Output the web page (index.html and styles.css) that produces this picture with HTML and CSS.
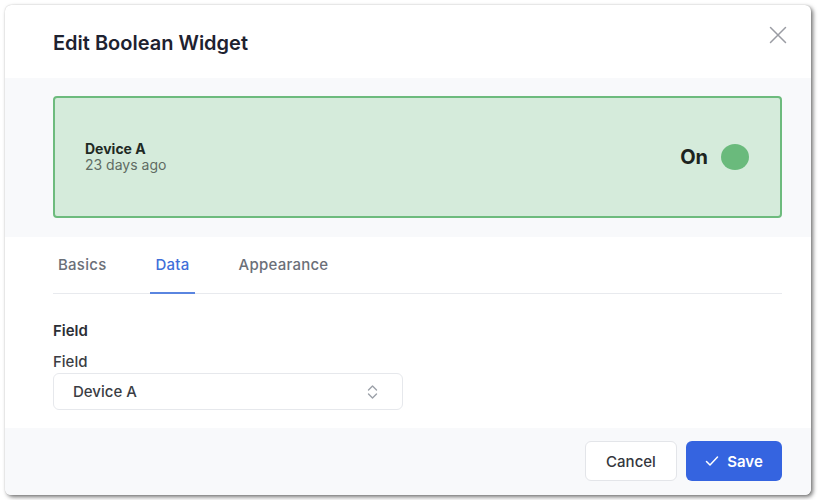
FILE: index.html
```html
<!DOCTYPE html>
<html lang="en">
<head>
<meta charset="utf-8">
<title>Edit Boolean Widget</title>
<link rel="stylesheet" href="styles.css">
</head>
<body>
<div class="dialog">
  <header class="dlg-header">
    <h1 class="dlg-title">Edit Boolean Widget</h1>
    <button class="close-btn" aria-label="Close">
      <svg width="18" height="18" viewBox="0 0 18 18"><path d="M1.5 1.5 L16.5 16.5 M16.5 1.5 L1.5 16.5" stroke="#9a9ca3" stroke-width="1.5" fill="none" stroke-linecap="round"/></svg>
    </button>
  </header>
  <section class="preview">
    <div class="bool-card">
      <div class="device">
        <div class="device-name">Device A</div>
        <div class="device-time">23 days ago</div>
      </div>
      <div class="state">
        <span class="state-label">On</span>
        <span class="state-dot"></span>
      </div>
    </div>
  </section>
  <section class="body">
    <nav class="tabs">
      <span class="tab">Basics</span>
      <span class="tab active">Data</span>
      <span class="tab">Appearance</span>
    </nav>
    <h2 class="section-title">Field</h2>
    <label class="field-label">Field</label>
    <div class="select">
      <span class="select-value">Device A</span>
      <svg class="chev" width="13" height="16" viewBox="0 0 13 16"><path d="M2.5 6 L6.5 2 L10.5 6 M2.5 10 L6.5 14 L10.5 10" stroke="#9ca0a8" stroke-width="1.4" fill="none" stroke-linecap="round" stroke-linejoin="round"/></svg>
    </div>
  </section>
  <footer class="dlg-footer">
    <button class="btn btn-cancel">Cancel</button>
    <button class="btn btn-save">
      <svg width="14" height="12" viewBox="0 0 14 12"><path d="M1.5 6.5 L5 10 L12.5 2" stroke="#fff" stroke-width="1.5" fill="none" stroke-linecap="round" stroke-linejoin="round"/></svg>
      Save
    </button>
  </footer>
</div>
</body>
</html>
```
FILE: styles.css
```css
* { box-sizing: border-box; }
html, body { margin: 0; background: #ffffff; }
body {
  padding: 5px;
  font-family: Inter, "Liberation Sans", sans-serif;
}
.dialog {
  width: 806px;
  height: 490px;
  background: #ffffff;
  border-radius: 6px;
  box-shadow: 0 0 1px rgba(0,0,0,0.25), 2px 2px 4px rgba(0,0,0,0.55);
  display: flex;
  flex-direction: column;
  overflow: hidden;
}
.dlg-header {
  height: 73px;
  display: flex;
  align-items: flex-start;
  justify-content: space-between;
  padding: 26px 22px 0 48px;
}
.dlg-title {
  margin: 0;
  font-size: 20px;
  line-height: 25px;
  font-weight: 600;
  color: #1e2230;
}
.close-btn {
  border: 0;
  background: transparent;
  padding: 0;
  margin-top: -7px;
  width: 22px;
  height: 22px;
  display: flex;
  align-items: center;
  justify-content: center;
}
.preview {
  background: #f8f9fb;
  padding: 18px 29px 19px 48px;
}
.bool-card {
  height: 122px;
  border: 2px solid #6dbb7d;
  border-radius: 4px;
  background: #d5ebdb;
  display: flex;
  align-items: center;
  justify-content: space-between;
  padding: 0 31px 0 30px;
}
.device-name {
  font-size: 14px;
  line-height: 16px;
  font-weight: 700;
  color: #1f2a24;
}
.device-time {
  font-size: 14px;
  line-height: 16px;
  color: #5f6b63;
}
.state {
  display: flex;
  align-items: center;
  gap: 13px;
}
.state-label {
  font-size: 20px;
  font-weight: 700;
  color: #1c2420;
}
.state-dot {
  width: 28px;
  height: 26px;
  border-radius: 50%;
  background: #6aba7c;
}
.body {
  flex: 1;
  padding: 0 29px 0 48px;
  display: flex;
  flex-direction: column;
  align-items: flex-start;
}
.tabs {
  align-self: stretch;
  display: flex;
  gap: 39px;
  border-bottom: 1px solid #e8eaee;
}
.tab {
  padding: 18px 5px 17px;
  font-size: 15px;
  line-height: 20px;
  font-weight: 500;
  letter-spacing: 0.25px;
  color: #6b6f78;
  border-bottom: 2px solid transparent;
  margin-bottom: -1px;
}
.tab.active {
  color: #3f6fd9;
  border-bottom-color: #5a85e0;
}
.section-title {
  margin: 27px 0 0;
  font-size: 15px;
  line-height: 20px;
  font-weight: 600;
  color: #2b2e35;
}
.field-label {
  margin-top: 11px;
  font-size: 15px;
  line-height: 20px;
  font-weight: 500;
  color: #3a3d44;
}
.select {
  margin-top: 1px;
  width: 350px;
  height: 37px;
  border: 1px solid #e6e8ec;
  border-radius: 6px;
  display: flex;
  align-items: center;
  justify-content: space-between;
  padding: 0 23px 0 19px;
}
.select-value {
  font-size: 15px;
  font-weight: 500;
  color: #3a3d44;
}
.dlg-footer {
  height: 67px;
  background: #f8f9fb;
  display: flex;
  justify-content: flex-end;
  align-items: flex-start;
  gap: 9px;
  padding: 13px 29px 0 0;
}
.btn {
  height: 40px;
  border-radius: 6px;
  font-family: Inter, "Liberation Sans", sans-serif;
  font-size: 15px;
  display: flex;
  align-items: center;
  justify-content: center;
}
.btn-cancel {
  width: 92px;
  background: #ffffff;
  border: 1px solid #e3e5e9;
  color: #33363d;
  font-weight: 500;
}
.btn-save {
  width: 96px;
  background: #3564e0;
  border: 0;
  color: #ffffff;
  font-weight: 600;
  gap: 8px;
}
```
